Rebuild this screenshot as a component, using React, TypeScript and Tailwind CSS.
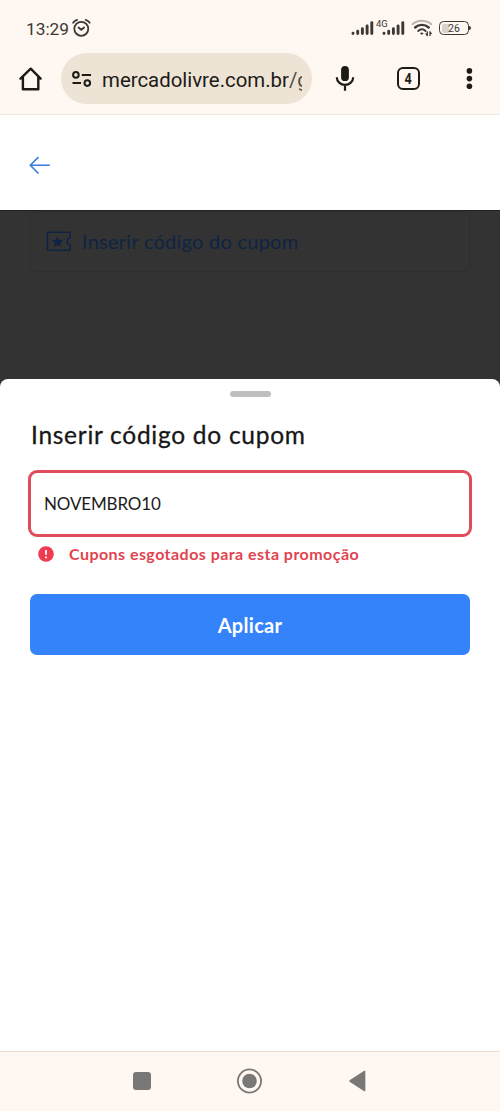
import type { ReactNode } from 'react';

function SignalBars() {
  return (
    <svg width="23" height="14" viewBox="0 0 23 14" stroke="#3b3836" strokeWidth="2.9" strokeLinecap="round">
      <path d="M2 12.3v0.2M6.7 10.2v2.3M11.4 7.8v4.7M16.1 5v7.5M20.8 1.6v10.9" />
    </svg>
  );
}

function StatusBar() {
  return (
    <div className="flex h-[53px] items-start pl-[26px] pt-[17px] text-[#3b3836]">
      <span className="w-[45px] text-[17.3px] leading-[24px]">13:29</span>
      <svg className="mt-px" width="20" height="20" viewBox="0 0 20 20" fill="none" stroke="#3b3836" strokeWidth="1.8">
        <circle cx="10.3" cy="10.8" r="7" />
        <path d="M2.1 4.8C2.9 3.5 4.4 2.2 6.1 1.8M18.7 4.8C17.9 3.5 16.4 2.2 14.7 1.8" strokeLinecap="round" />
        <path d="M7.5 9.5l2.8 2.3 2.8-2.3" strokeLinecap="round" />
      </svg>
      <div className="ml-[260px] flex items-start">
        <div className="mt-1"><SignalBars /></div>
        <span className="ml-[2px] w-[6px] whitespace-nowrap text-[9.5px] leading-[13px]">4G</span>
        <div className="mt-1"><SignalBars /></div>
        <svg className="ml-[6px] mt-[2px]" width="22" height="18" viewBox="0 0 22 18" fill="none" strokeWidth="2" strokeLinecap="round">
          <path d="M1.5 5.2C6.8.6 15 .6 20.3 5.2" stroke="#b9b3ad" />
          <path d="M4.1 8.5c3.8-3.5 9.8-3.5 13.6 0" stroke="#3b3836" strokeWidth="2.4" />
          <path d="M7.2 11.9c2.2-1.9 5.2-1.9 7.4 0" stroke="#3b3836" />
          <path d="M9 14.2l1.8 1.8 1.8-1.8a2.7 2.7 0 0 0-3.6 0z" fill="#3b3836" strokeWidth="0" />
          <path d="M16.3 12.8v3.8M15 14.9l1.3 1.7M19 16.6v-3.8M20.2 14.5L19 12.8" stroke="#3b3836" strokeWidth="1.3" />
        </svg>
        <div className="ml-[6px] mt-[4px] flex h-[14px] w-[30px] items-center rounded-[4.5px] border-[1.5px] border-[#3b3836] bg-[linear-gradient(to_right,#d8d2cc_7px,transparent_7px)] bg-origin-content bg-clip-content p-[1.5px]">
          <span className="w-full pt-px text-center text-[10.5px] leading-[10px]">26</span>
        </div>
        <i className="mt-[9px] h-[4px] w-[2px] rounded-r-sm bg-[#3b3836]" />
      </div>
    </div>
  );
}

function BrowserBar() {
  return (
    <div className="flex h-[61px] items-start text-[#1d1b16]">
      <svg className="ml-[19px] mt-[13px]" width="24" height="26" viewBox="0 0 24 26" fill="none" stroke="currentColor" strokeWidth="2.4" strokeLinejoin="round" strokeLinecap="round">
        <path d="M1.5 12.6L11.7 2.7l9.9 9.9M3.9 11v12.2h15.4V11" />
      </svg>
      <div className="ml-[18px] flex h-[51px] w-[251px] items-center rounded-full bg-[#ede4d6] pl-[11px] pr-[10px]">
        <svg className="shrink-0" width="20" height="18" viewBox="0 0 20 18" fill="none" stroke="currentColor" strokeWidth="2">
          <circle cx="3.9" cy="4.9" r="2.8" />
          <path d="M9.8 4.9H19M.5 13.1H9" />
          <circle cx="15.3" cy="13.1" r="2.8" />
        </svg>
        <span className="ml-[10px] mt-[2px] flex-1 overflow-hidden whitespace-nowrap text-[20.4px] leading-7">
          mercadolivre.com.br<span className="text-[#4f4b43]">/g</span>
        </span>
      </div>
      <svg className="ml-[23px] mt-[12px]" width="20" height="27" viewBox="0 0 20 27" fill="none" stroke="currentColor" strokeWidth="2.2">
        <rect x="6.1" y="1.1" width="7.8" height="15" rx="3.9" fill="currentColor" strokeWidth="0" />
        <path d="M1.8 12.2a8.2 7.6 0 0 0 16.4 0M10 19.8v6" />
      </svg>
      <div className="ml-[42px] mt-[14px] flex h-[23px] w-[23px] items-center justify-center rounded-[6px] border-2 border-[#1d1b16] text-[14px] font-bold leading-none">
        <span className="scale-x-90">4</span>
      </div>
      <svg className="ml-[45px] mt-[14px]" width="8" height="24" viewBox="0 0 8 24" fill="currentColor">
        <circle cx="4.4" cy="3.9" r="2.8" />
        <circle cx="4.4" cy="11.6" r="2.8" />
        <circle cx="4.4" cy="19.3" r="2.8" />
      </svg>
    </div>
  );
}

function CouponCard() {
  return (
    <div className="mx-[30px] flex h-[61px] items-center rounded-[7px] border border-[#2e2e2e] pl-[15px]">
      <svg width="26" height="22" viewBox="0 0 26 22" fill="none" stroke="#0f2444" strokeWidth="1.6" strokeLinejoin="round">
        <path d="M2.4 1.3h21c.5 0 .8.3.8.8v4.4a3.9 3.9 0 0 0 0 7.6v4.3c0 .5-.3.8-.8.8h-21c-.6 0-1-.4-1-1V2.3c0-.6.4-1 1-1z" />
        <path d="M11.6 5.2l1.7 3.5 3.9.5-2.9 2.7.7 3.8-3.4-1.9-3.4 1.9.7-3.8L6 9.2l3.9-.5z" fill="#0f2444" strokeWidth="0" />
      </svg>
      <span className="-mt-[2px] ml-[10px] whitespace-nowrap text-[20px] leading-7 tracking-[0.25px] text-[#0f2444]">
        Inserir código do cupom
      </span>
    </div>
  );
}

function Sheet({ children }: { children: ReactNode }) {
  return (
    <div className="flex h-[672px] flex-col rounded-t-[8px] bg-white px-[30px]">
      <div className="mx-auto mt-[12px] h-[6px] w-[41px] shrink-0 rounded-full bg-[#bfbfbf]" />
      {children}
    </div>
  );
}

function NavBar() {
  return (
    <div className="flex h-[60px] items-center border-t border-[#ecdfcf] bg-[#fff7f1] pb-[2px]">
      <div className="ml-[133px] h-[18px] w-[18px] rounded-[3px] bg-[#797876]" />
      <svg className="ml-[86px]" width="26" height="26" viewBox="0 0 26 26">
        <circle cx="12.5" cy="13" r="11.6" fill="none" stroke="#797876" strokeWidth="1.8" />
        <circle cx="12.5" cy="13" r="7.3" fill="#797876" />
      </svg>
      <svg className="ml-[85px]" width="19" height="22" viewBox="0 0 19 22">
        <path d="M2 11L16.6 1.5v19z" fill="#797876" stroke="#797876" strokeWidth="1.5" strokeLinejoin="round" />
      </svg>
    </div>
  );
}

export default function App() {
  return (
    <div className="flex h-[1111px] w-[500px] flex-col overflow-hidden bg-white font-['Lato',sans-serif]">
      <div className="h-[115px] border-b border-[#f1e6d8] bg-[#fff7f1] font-['Roboto',sans-serif]">
        <StatusBar />
        <BrowserBar />
      </div>

      <header className="flex h-[95px] items-center pl-[29px] pt-[5px]">
        <svg width="22" height="18" viewBox="0 0 22 18" fill="none" stroke="#3b7ddd" strokeWidth="1.6">
          <path d="M20.8 9.3H1.3M9.5 1.1L1.3 9.3l8.2 8.2" />
        </svg>
      </header>

      <main className="flex-1 bg-white">
        <div className="-mb-[10px] h-[179px] border-t border-[#222222] bg-[#333333]">
          <CouponCard />
        </div>
        <Sheet>
          <h1 className="mt-[22px] whitespace-nowrap pl-px text-[24.5px] leading-8 tracking-[0.72px] text-[#171717] [-webkit-text-stroke:0.3px_#171717]">
            Inserir código do cupom
          </h1>
          <div className="-mx-[2px] mt-[19px] flex h-[67px] items-center rounded-[9px] border-[3px] border-[#e04c5b] pl-[13px] text-[17px] tracking-[-0.15px] text-[#1c1c1c]">
            NOVEMBRO10
          </div>
          <div className="mt-[7px] flex h-[20px] items-center pl-[8px]">
            <svg width="16" height="16" viewBox="0 0 16 16">
              <circle cx="8" cy="8" r="7.8" fill="#ee3b50" />
              <path d="M8 4v4.8M8 10.4v1.8" stroke="#fff" strokeWidth="1.8" />
            </svg>
            <span className="ml-[15px] whitespace-nowrap text-[16px] font-bold tracking-[0.46px] text-[#df4450]">
              Cupons esgotados para esta promoção
            </span>
          </div>
          <button className="mt-[30px] h-[61px] rounded-[7px] bg-[#3483fa] text-[20px] font-bold tracking-[0.3px] text-white">
            Aplicar
          </button>
        </Sheet>
      </main>

      <NavBar />
    </div>
  );
}
